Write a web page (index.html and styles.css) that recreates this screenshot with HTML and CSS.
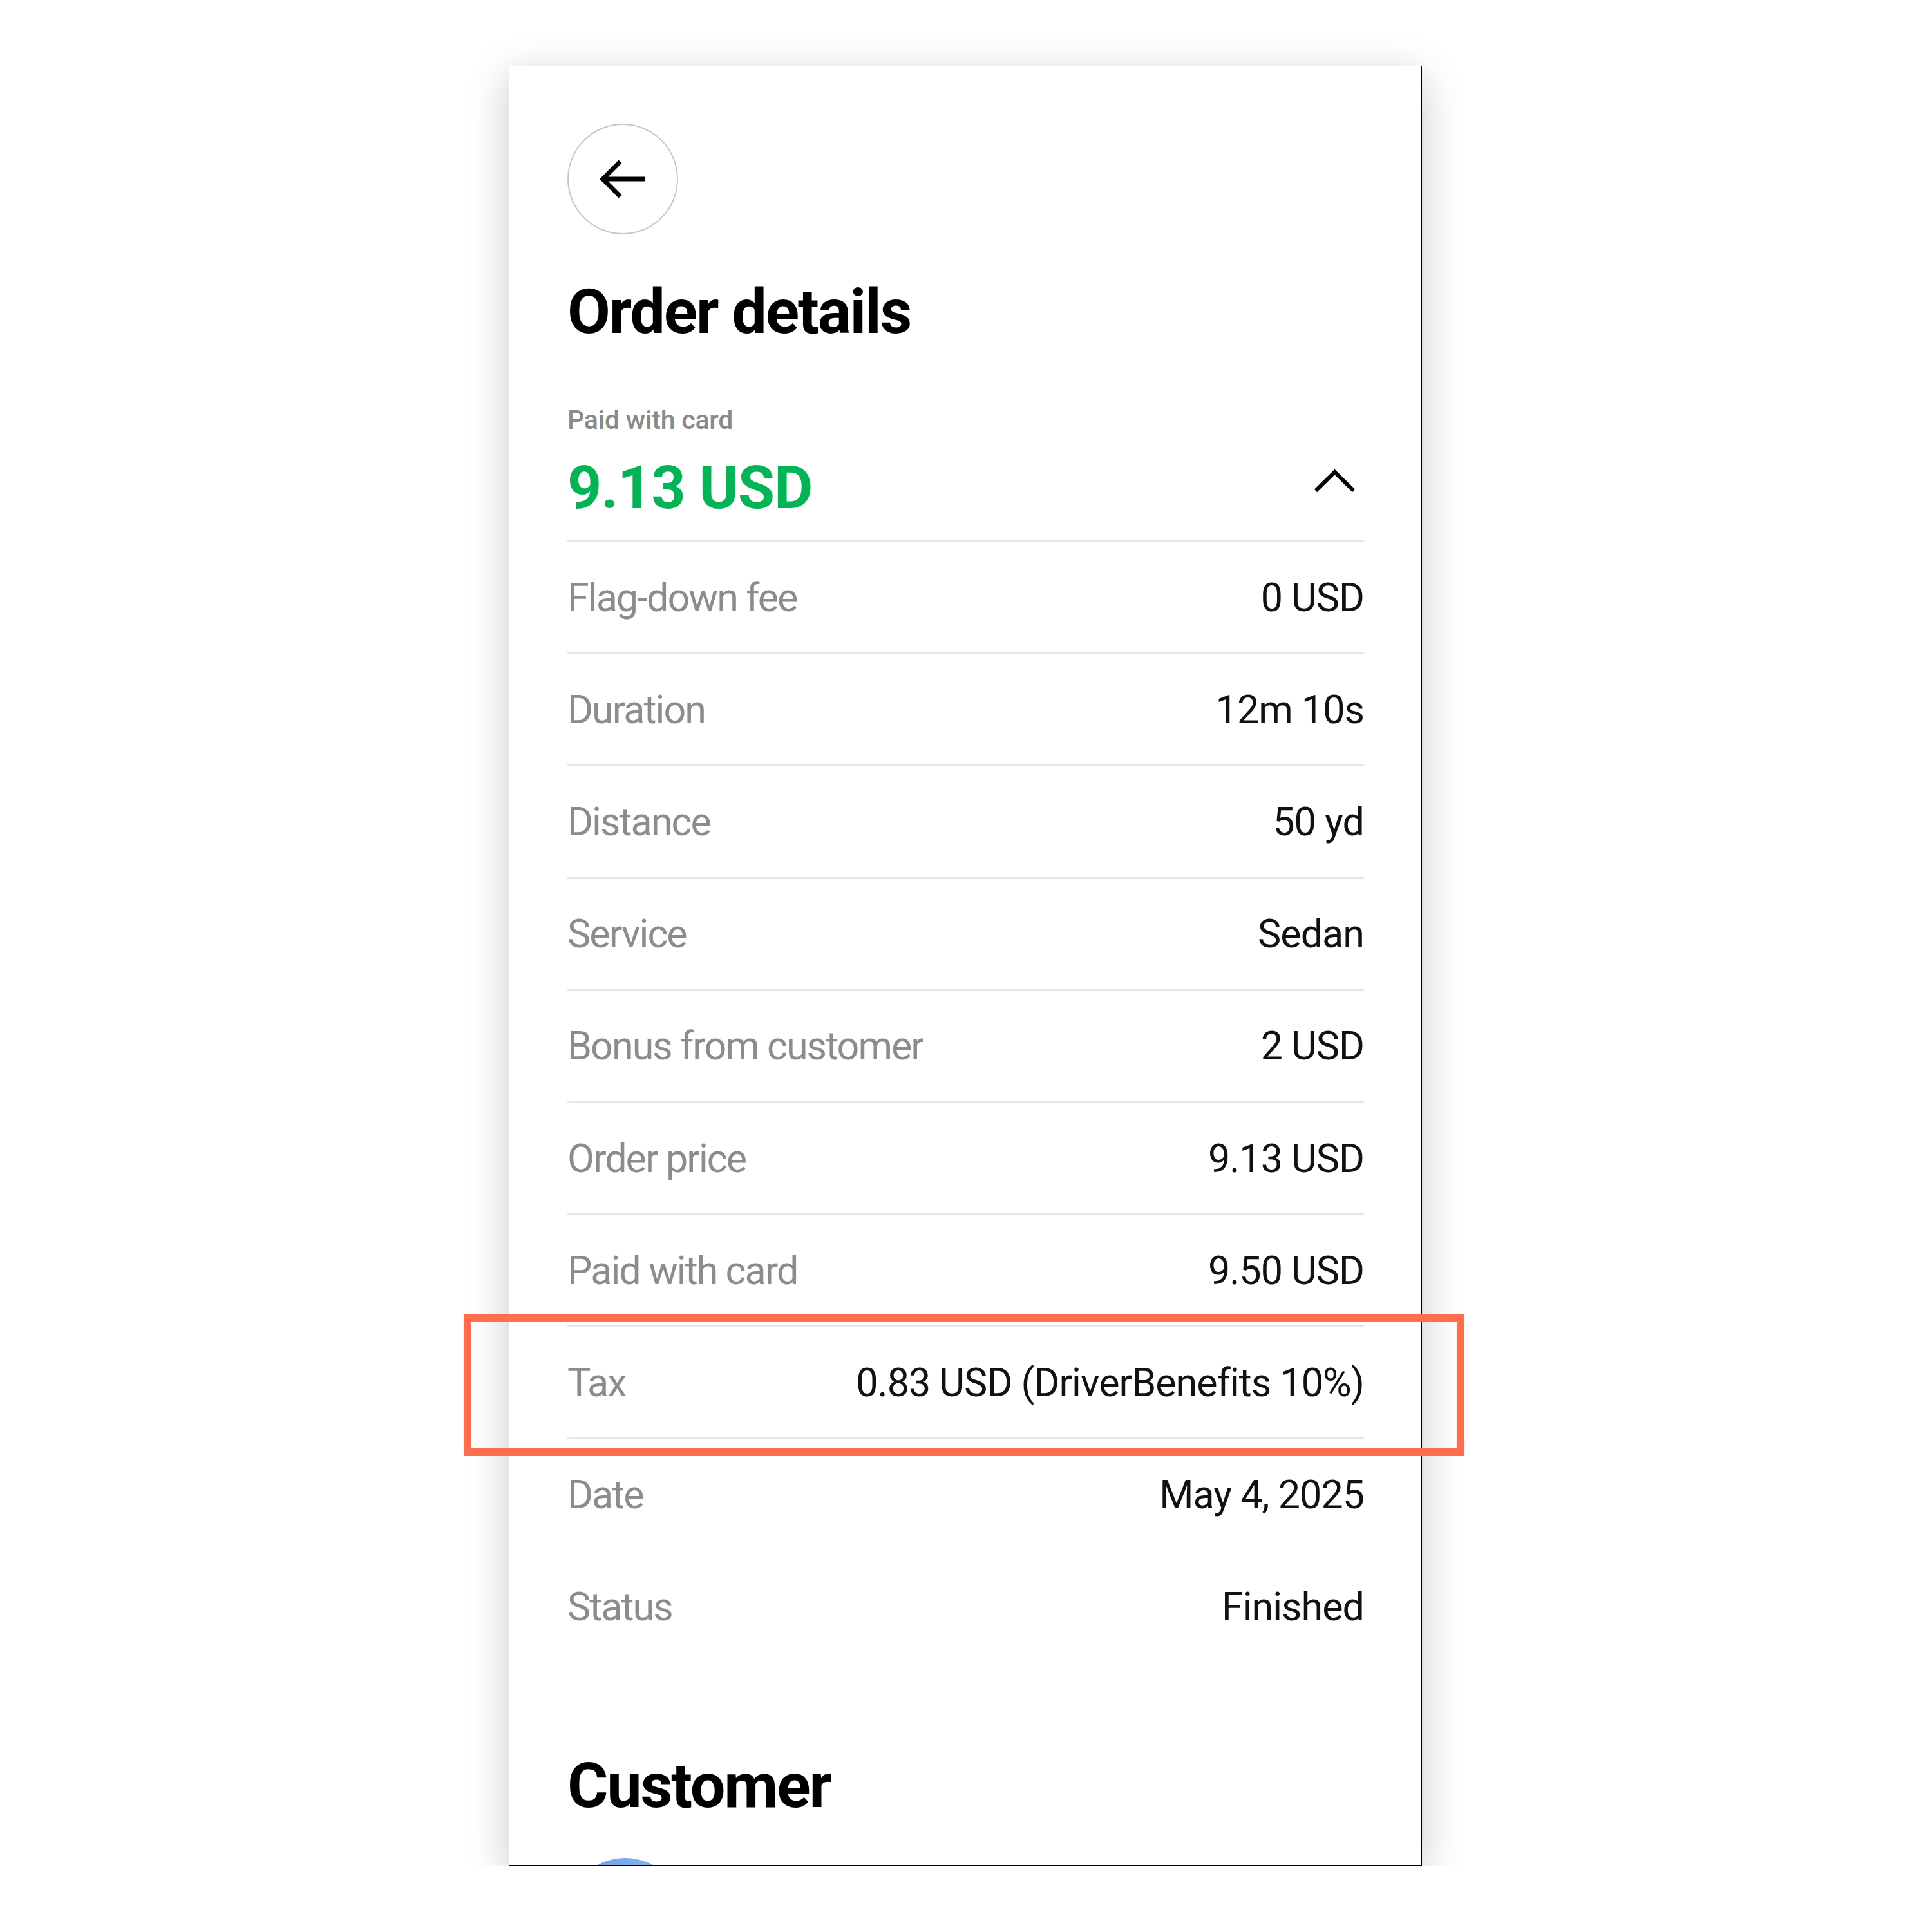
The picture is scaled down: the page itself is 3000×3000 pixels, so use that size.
FILE: index.html
```html
<!DOCTYPE html>
<html lang="en">
<head>
<meta charset="utf-8">
<title>Order details</title>
<link rel="stylesheet" href="styles.css">
</head>
<body>
<div class="phone">
  <div class="back">
    <svg class="back-icon" width="80" height="80" viewBox="0 0 80 80"><path d="M74 40 H10 M36 13 L9 40 L36 67" fill="none" stroke="#000" stroke-width="7" stroke-linejoin="miter"/></svg>
  </div>
  <h1 class="title">Order details</h1>
  <div class="summary">
    <div class="summary-label">Paid with card</div>
    <div class="summary-main">
      <div class="amount">9.13 USD</div>
      <svg class="chevron" width="80" height="80" viewBox="0 0 80 80"><path d="M11 44 L40.5 15 L70 44" fill="none" stroke="#000" stroke-width="6"/></svg>
    </div>
  </div>
  <div class="rows">
    <div class="row"><span class="label">Flag-down fee</span><span class="value">0 USD</span></div>
    <div class="row"><span class="label">Duration</span><span class="value">12m 10s</span></div>
    <div class="row"><span class="label">Distance</span><span class="value">50 yd</span></div>
    <div class="row"><span class="label">Service</span><span class="value">Sedan</span></div>
    <div class="row"><span class="label">Bonus from customer</span><span class="value">2 USD</span></div>
    <div class="row"><span class="label">Order price</span><span class="value">9.13 USD</span></div>
    <div class="row"><span class="label">Paid with card</span><span class="value">9.50 USD</span></div>
    <div class="row row-highlight"><span class="label">Tax</span><span class="value">0.83 USD (DriverBenefits 10%)</span><span class="highlight"></span></div>
    <div class="row row-plain"><span class="label">Date</span><span class="value">May 4, 2025</span></div>
    <div class="row row-plain"><span class="label">Status</span><span class="value">Finished</span></div>
  </div>
  <h2 class="title customer-title">Customer</h2>
  <div class="avatar"></div>
</div>
</body>
</html>
```
FILE: styles.css
```css
html, body {
  margin: 0;
  padding: 0;
  background: #ffffff;
}

body {
  font-family: "Roboto", "Inter", "Liberation Sans", sans-serif;
  color: #000;
}

.phone {
  box-sizing: border-box;
  width: 1418px;
  height: 2795px;
  margin: 102px 0 0 790px;
  padding: 89px 89px 0 90px;
  border: 1px solid #000;
  background: #fff;
  box-shadow: 0 16px 60px rgba(0, 0, 0, 0.22);
  overflow-x: visible;
  overflow-y: clip;
}

.back {
  box-sizing: border-box;
  width: 172px;
  height: 172px;
  border: 2px solid #c6c6c6;
  border-radius: 50%;
  display: flex;
  align-items: center;
  justify-content: center;
}

.title {
  margin: 62px 0 0;
  font-size: 97px;
  line-height: 1.2;
  font-weight: 700;
  letter-spacing: -0.022em;
}

.summary {
  margin-top: 86px;
  border-bottom: 3px solid #e6e6e6;
  padding-bottom: 25px;
}

.summary-label {
  font-size: 41px;
  line-height: 48px;
  font-weight: 500;
  color: #8a8a8a;
  letter-spacing: -0.005em;
}

.summary-main {
  margin-top: 26px;
  display: flex;
  align-items: center;
  justify-content: space-between;
}

.amount {
  font-size: 93px;
  line-height: 1.2;
  font-weight: 700;
  color: #02b456;
  letter-spacing: -0.012em;
}

.chevron {
  margin-right: 6px;
}

.row {
  position: relative;
  box-sizing: border-box;
  height: 174.2px;
  display: flex;
  align-items: center;
  justify-content: space-between;
  border-bottom: 3px solid #e6e6e6;
  font-size: 61px;
}

.row-plain {
  border-bottom-color: transparent;
}

.label {
  color: #8c8c8c;
  letter-spacing: -0.032em;
}

.value {
  color: #111;
  letter-spacing: -0.016em;
}

.highlight {
  position: absolute;
  left: -161px;
  right: -156px;
  top: -20px;
  bottom: -29px;
  border: 12px solid #ff6e4f;
  pointer-events: none;
}

.customer-title {
  margin-top: 131px;
}

.avatar {
  margin-top: 54px;
  width: 180px;
  height: 180px;
  border-radius: 50%;
  background: linear-gradient(90deg, #6b9be6, #93b9ef);
}
```
